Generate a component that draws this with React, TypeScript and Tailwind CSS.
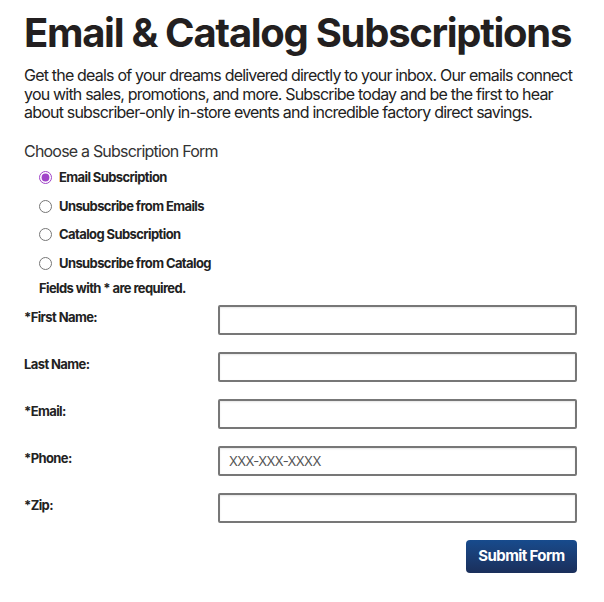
import React, { useState } from 'react';

const options = [
  'Email Subscription',
  'Unsubscribe from Emails',
  'Catalog Subscription',
  'Unsubscribe from Catalog',
];

const fields = [
  { label: '*First Name:', name: 'firstName', placeholder: '' },
  { label: 'Last Name:', name: 'lastName', placeholder: '' },
  { label: '*Email:', name: 'email', placeholder: '' },
  { label: '*Phone:', name: 'phone', placeholder: 'XXX-XXX-XXXX' },
  { label: '*Zip:', name: 'zip', placeholder: '' },
];

const App: React.FC = () => {
  const [selected, setSelected] = useState(options[0]);

  return (
    <div className="bg-white px-6 pt-[9px] font-['Inter',sans-serif] text-[#222]">
      <h1 className="whitespace-nowrap text-[40px] font-bold leading-[48px] tracking-[-1.3px] text-[#231f20]">
        Email &amp; Catalog Subscriptions
      </h1>
      <p className="mt-[9px] pr-[3px] text-[16px] leading-[18.5px] tracking-[-0.8px] text-[#222]">
        Get the deals of your dreams delivered directly to your inbox. Our emails connect you with sales,
        promotions, and more. Subscribe today and be the first to hear about subscriber-only in-store events
        and incredible factory direct savings.
      </p>

      <div className="mt-[19px] text-[16px] leading-[20px] tracking-[-0.8px] text-[#333]">
        Choose a Subscription Form
      </div>

      <div className="mt-[3px] flex flex-col pl-[15px]">
        {options.map((opt) => (
          <label key={opt} className="flex h-[28.5px] items-center gap-[7px] text-[13px] font-bold tracking-[-0.6px]">
            <input
              type="radio"
              name="form"
              checked={selected === opt}
              onChange={() => setSelected(opt)}
              className="m-0 h-[13px] w-[13px] accent-[#a044c8]"
            />
            {opt}
          </label>
        ))}
        <div className="mt-[1px] text-[13px] font-bold leading-[19.5px] tracking-[-0.6px]">
          Fields with * are required.
        </div>
      </div>

      <form className="mt-[7px] flex flex-col gap-[17px]" onSubmit={(e) => e.preventDefault()}>
        {fields.map((f) => (
          <div key={f.name} className="flex items-start">
            <label className="w-[194px] pt-[3px] text-[13px] font-bold leading-[19.5px] tracking-[-0.6px]">
              {f.label}
            </label>
            <input
              type="text"
              name={f.name}
              placeholder={f.placeholder}
              className="h-[30px] w-[359px] rounded-[2px] border-2 border-[#777] px-[9px] text-[13px] tracking-[-0.6px] shadow-[inset_0_1px_2px_rgba(0,0,0,0.1)] placeholder:text-[#555] focus:outline-none"
            />
          </div>
        ))}
        <div className="flex justify-end pr-[3px]">
          <button
            type="submit"
            className="h-[33px] w-[111px] rounded-[4px] bg-gradient-to-b from-[#174b8d] to-[#1a2f5b] text-[15px] font-bold tracking-[-0.6px] text-white"
          >
            Submit Form
          </button>
        </div>
      </form>
    </div>
  );
};

export default App;
